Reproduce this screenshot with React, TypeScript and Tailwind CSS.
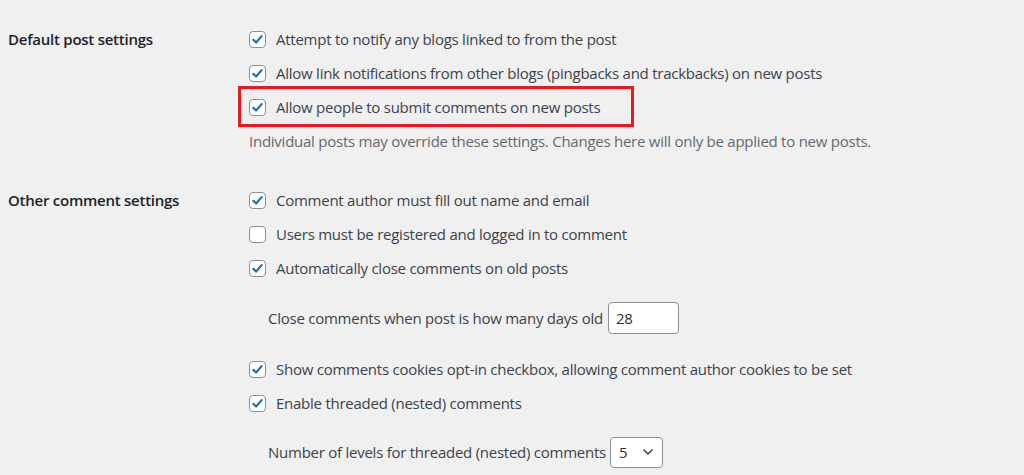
import { ChevronDown } from 'lucide-react'

const Check = ({ checked = true }: { checked?: boolean }) => (
  <span className="w-[17px] h-[17px] shrink-0 rounded-[4px] border border-[#8c8f94] bg-white flex items-center justify-center">
    {checked && (
      <svg viewBox="0 0 20 20" className="w-[15px] h-[15px]">
        <path d="M4.5 10.5 L8.2 14 L15.5 5.5" fill="none" stroke="#2271b1" strokeWidth="3" strokeLinecap="round" strokeLinejoin="round" />
      </svg>
    )}
  </span>
)

const Option = ({ label, checked = true, highlight = false }: { label: string; checked?: boolean; highlight?: boolean }) => (
  <div className="relative h-[34px] flex items-center gap-[10px]">
    {highlight && <span className="absolute left-[-11px] top-[-4px] w-[396px] h-[41px] border-[3px] border-[#e8191f]" />}
    <Check checked={checked} />
    <span>{label}</span>
  </div>
)

export default function App() {
  return (
    <div className="w-[1024px] h-[475px] overflow-hidden bg-[#f0f0f1] text-[15px] text-[#3c434a] font-['Open_Sans',sans-serif] tracking-[-0.25px]">
      <div className="flex pt-[22px]">
        <div className="w-[249px] pl-[8px] h-[34px] flex items-center font-semibold text-[#1d2327]">Default post settings</div>
        <div className="flex flex-col">
          <Option label="Attempt to notify any blogs linked to from the post" />
          <Option label="Allow link notifications from other blogs (pingbacks and trackbacks) on new posts" />
          <Option label="Allow people to submit comments on new posts" highlight />
          <div className="h-[34px] flex items-center text-[#646970]">
            Individual posts may override these settings. Changes here will only be applied to new posts.
          </div>
        </div>
      </div>

      <div className="flex mt-[25px]">
        <div className="w-[249px] pl-[8px] h-[34px] flex items-center font-semibold text-[#1d2327]">Other comment settings</div>
        <div className="flex flex-col">
          <Option label="Comment author must fill out name and email" />
          <Option label="Users must be registered and logged in to comment" checked={false} />
          <Option label="Automatically close comments on old posts" />
          <div className="h-[34px] mt-[16px] pl-[19px] flex items-center gap-[5px]">
            <span>Close comments when post is how many days old</span>
            <input
              readOnly
              value="28"
              className="w-[71px] h-[32px] rounded-[4px] border border-[#8c8f94] bg-white px-[7px] text-[#2c3338] outline-none"
            />
          </div>
          <div className="mt-[17px]">
            <Option label="Show comments cookies opt-in checkbox, allowing comment author cookies to be set" />
          </div>
          <Option label="Enable threaded (nested) comments" />
          <div className="h-[34px] mt-[15px] pl-[19px] flex items-center gap-[4px]">
            <span>Number of levels for threaded (nested) comments</span>
            <div className="w-[53px] h-[31px] rounded-[4px] border border-[#8c8f94] bg-white pl-[8px] pr-[6px] flex items-center justify-between text-[#2c3338]">
              <span>5</span>
              <ChevronDown className="w-[16px] h-[16px] text-[#3c434a]" strokeWidth={2.5} />
            </div>
          </div>
        </div>
      </div>
    </div>
  )
}
